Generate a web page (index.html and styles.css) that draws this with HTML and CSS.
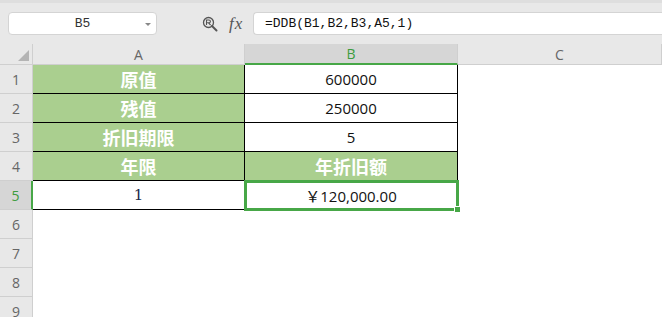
FILE: index.html
```html
<!DOCTYPE html>
<html lang="zh-CN">
<head>
  <meta charset="UTF-8">
  <title>DDB</title>
  <link rel="stylesheet" href="styles.css">
</head>
<body>
  <div class="toolbar">
    <div class="namebox">
      <span class="ref">B5</span>
      <span class="caret"></span>
    </div>
    <div class="tools">
      <svg class="lens" width="16" height="16" viewBox="0 0 16 16">
        <circle cx="6.5" cy="6.5" r="5" fill="none" stroke="#555" stroke-width="1.3"/>
        <path d="M10 10 L14.5 14.5" stroke="#555" stroke-width="2" stroke-linecap="round"/>
        <path d="M4.5 9 V4 H7 A1.4 1.4 0 0 1 7 6.8 H4.5 M6.5 6.8 L8.6 9" fill="none" stroke="#555" stroke-width="1.1"/>
      </svg>
      <span class="fx">fx</span>
    </div>
    <div class="formula">=DDB(B1,B2,B3,A5,1)</div>
  </div>

  <div class="sheet">
    <div class="corner"></div>
    <div class="colhead">A</div>
    <div class="colhead active">B</div>
    <div class="colhead">C</div>

    <div class="rowhead">1</div>
    <div class="cell label">原值</div>
    <div class="cell">600000</div>
    <div class="blank"></div>

    <div class="rowhead">2</div>
    <div class="cell label">残值</div>
    <div class="cell">250000</div>
    <div class="blank"></div>

    <div class="rowhead">3</div>
    <div class="cell label">折旧期限</div>
    <div class="cell">5</div>
    <div class="blank"></div>

    <div class="rowhead">4</div>
    <div class="cell label">年限</div>
    <div class="cell label">年折旧额</div>
    <div class="blank"></div>

    <div class="rowhead active">5</div>
    <div class="cell year">1</div>
    <div class="cell selected">￥120,000.00</div>
    <div class="blank"></div>

    <div class="rowhead">6</div>
    <div class="blank wide"></div>
    <div class="rowhead">7</div>
    <div class="blank wide"></div>
    <div class="rowhead">8</div>
    <div class="blank wide"></div>
    <div class="rowhead">9</div>
    <div class="blank wide"></div>
  </div>
</body>
</html>
```

FILE: styles.css
```css
body {
  margin: 0;
  width: 662px;
  height: 317px;
  overflow: hidden;
  background: #ffffff;
  font-family: "Open Sans", "Noto Sans CJK SC", sans-serif;
}

.toolbar {
  height: 44px;
  box-sizing: border-box;
  padding: 12px 0 9px 8px;
  display: flex;
  align-items: stretch;
  background: #e8e8e8;
  border-top: 3px solid #dedede;
  padding-top: 9px;
}

.namebox {
  width: 149px;
  box-sizing: border-box;
  background: #fff;
  border: 1px solid #d4d4d4;
  border-radius: 4px;
  display: flex;
  align-items: center;
  position: relative;
}

.ref {
  flex: 1;
  text-align: center;
  font-family: "Liberation Mono", monospace;
  font-size: 13px;
  color: #333;
}

.caret {
  position: absolute;
  right: 5px;
  top: 10px;
  border-left: 3px solid transparent;
  border-right: 3px solid transparent;
  border-top: 3px solid #888;
}

.tools {
  width: 96px;
  display: flex;
  align-items: center;
  gap: 11px;
  padding-left: 45px;
  box-sizing: border-box;
}

.fx {
  font-family: "Liberation Serif", serif;
  font-style: italic;
  font-size: 17px;
  color: #555;
  letter-spacing: 1px;
}

.formula {
  flex: 1;
  background: #fff;
  border: 1px solid #d4d4d4;
  border-right: none;
  border-radius: 4px 0 0 4px;
  display: flex;
  align-items: center;
  padding-left: 11px;
  font-family: "Liberation Mono", monospace;
  font-size: 13px;
  color: #111;
}

.sheet {
  display: grid;
  grid-template-columns: 33px 212px 213px 1fr;
  grid-template-rows: 21px repeat(9, 29px);
}

.corner {
  background: #e8e8e8;
  border-right: 1px solid #cfcfcf;
  border-bottom: 1px solid #cfcfcf;
  position: relative;
}

.corner::after {
  content: "";
  position: absolute;
  left: 18px;
  top: 6px;
  width: 11px;
  height: 11px;
  background: #b4b4b4;
  clip-path: polygon(100% 0, 100% 100%, 0 100%);
}

.colhead {
  background: #e8e8e8;
  border-right: 1px solid #cfcfcf;
  border-bottom: 1px solid #cfcfcf;
  display: flex;
  align-items: center;
  justify-content: center;
  font-size: 14px;
  color: #666;
}

.colhead.active {
  background: #d6d6d6;
  color: #3d9c3d;
  border-bottom: 2px solid #47a747;
}

.rowhead {
  background: #e8e8e8;
  border-right: 1px solid #cfcfcf;
  border-bottom: 1px solid #cfcfcf;
  display: flex;
  align-items: center;
  justify-content: center;
  font-size: 14px;
  color: #666;
}

.rowhead.active {
  background: #d6d6d6;
  color: #3d9c3d;
  border-right: 2px solid #47a747;
}

.cell {
  border-right: 1px solid #000;
  border-bottom: 1px solid #000;
  display: flex;
  align-items: center;
  justify-content: center;
  font-size: 15px;
  color: #111;
  background: #fff;
}

.label {
  background: #aacf8f;
  color: #fff;
  font-weight: bold;
  font-size: 18px;
  font-family: "Noto Sans CJK SC", sans-serif;
}

.year {
  font-family: "DejaVu Serif", serif;
  font-size: 15px;
  color: #1a2a4a;
}

.selected {
  position: relative;
}

.selected::after {
  content: "";
  position: absolute;
  left: -1px;
  top: -1px;
  right: -2px;
  bottom: -2px;
  border: 3px solid #47a747;
}

.selected::before {
  content: "";
  position: absolute;
  right: -4px;
  bottom: -4px;
  width: 5px;
  height: 5px;
  background: #47a747;
  border: 1px solid #fff;
  z-index: 1;
}

.blank.wide {
  grid-column: span 3;
}
```
